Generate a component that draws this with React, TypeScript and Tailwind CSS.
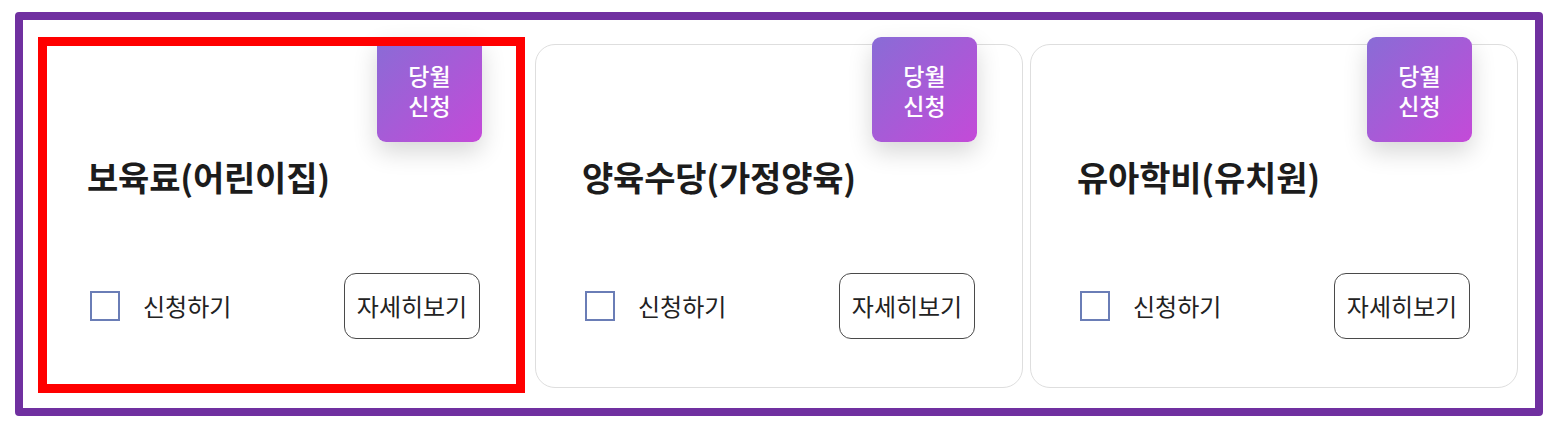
import React from "react";

const programs = [
    { id: 1, title: "보육료(어린이집)", selected: true },
    { id: 2, title: "양육수당(가정양육)", selected: false },
    { id: 3, title: "유아학비(유치원)", selected: false },
];

function ProgramCard({ title, selected }: { title: string; selected: boolean }) {
    return (
        <div className="relative">
            <div
                className={`relative h-[344px] rounded-[20px] border bg-white flex flex-col pl-[46px] pr-[47px] pt-[110px] ${
                    selected ? "border-transparent" : "border-[#dedede]"
                }`}
            >
                <div className="absolute top-[-8px] right-[45px] w-[105px] h-[105px] rounded-[9px] bg-[linear-gradient(135deg,#896cd6,#c44ad8)] shadow-[0_10px_24px_rgba(0,0,0,0.16)] flex flex-col items-center justify-center text-white text-[23px] leading-[30px] font-medium">
                    <span>당월</span>
                    <span>신청</span>
                </div>
                <h3 className="h-[44px] leading-[44px] text-[34px] font-bold tracking-[-0.2px] text-[#1c1c1c]">
                    {title}
                </h3>
                <div className="mt-[74px] flex items-center justify-between">
                    <label className="flex items-center gap-[23px] pl-[3px]">
                        <span className="w-[30px] h-[30px] border-2 border-[#6a7db6] bg-white" />
                        <span className="text-[24px] text-[#222]">신청하기</span>
                    </label>
                    <button className="h-[66px] w-[136px] rounded-[12px] border border-[#4a4a4a] bg-white text-[24px] text-[#222]">
                        자세히보기
                    </button>
                </div>
            </div>
            {selected && (
                <div className="pointer-events-none absolute top-[-7px] left-[-2px] w-[487px] h-[356px] border-[9px] border-[#ff0000]" />
            )}
        </div>
    );
}

export default function App() {
    return (
        <div
            className="w-[1558px] h-[433px] bg-white pt-[12px] pl-[15px]"
            style={{ fontFamily: '"Noto Sans CJK KR", "Noto Sans", sans-serif' }}
        >
            <div className="w-[1528px] h-[404px] border-[8px] border-[#7030a0] rounded-[4px] pt-[24px] pl-[17px] pr-[17px]">
                <div className="grid grid-cols-[488px_488px_488px] gap-x-[7px]">
                    {programs.map((p) => (
                        <ProgramCard key={p.id} title={p.title} selected={p.selected} />
                    ))}
                </div>
            </div>
        </div>
    );
}
